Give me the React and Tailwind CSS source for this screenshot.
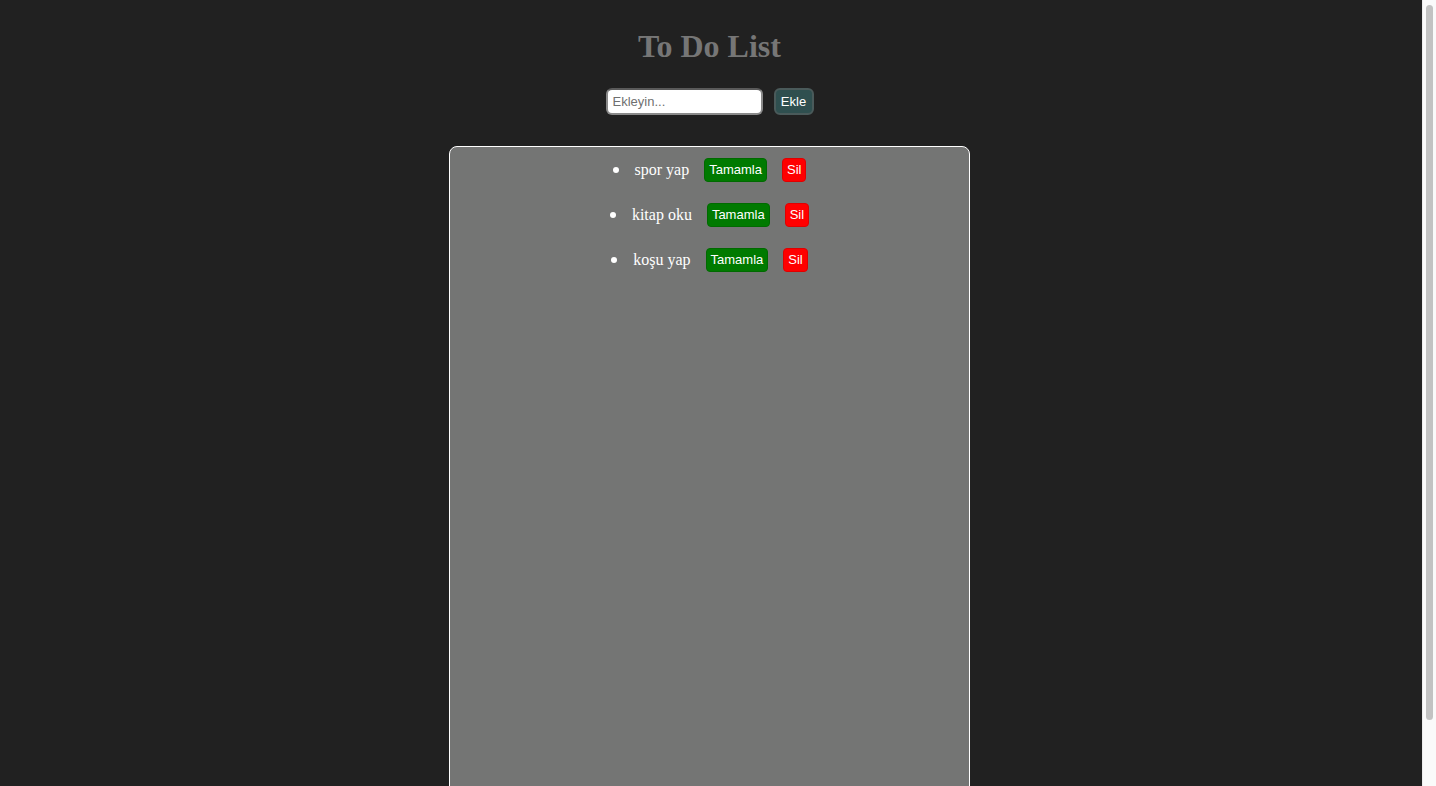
import { useState } from 'react';

const serif = { fontFamily: '"Liberation Serif", "Times New Roman", serif' };

function TodoItem({ text, onDone, onDelete }) {
  return (
    <li className="flex items-center justify-center h-[45px]">
      <span className="w-[6px] h-[6px] rounded-full bg-white mr-[16px]" />
      <span className="text-white text-[16px]" style={serif}>{text}</span>
      <button
        onClick={onDone}
        className="ml-[15px] h-[24px] px-[4px] rounded-[4px] bg-[#007a00] text-white text-[13px] border border-[#006a00]"
      >
        Tamamla
      </button>
      <button
        onClick={onDelete}
        className="ml-[15px] h-[24px] px-[4px] rounded-[4px] bg-[#ff0000] text-white text-[13px] border border-[#e00000]"
      >
        Sil
      </button>
    </li>
  );
}

export default function App() {
  const [items, setItems] = useState(['spor yap', 'kitap oku', 'koşu yap']);
  const [value, setValue] = useState('');

  const add = () => {
    if (!value.trim()) return;
    setItems([...items, value.trim()]);
    setValue('');
  };

  return (
    <div className="flex h-[786px] overflow-hidden" style={{ fontFamily: '"Liberation Sans", Arial, sans-serif' }}>
      <div className="flex-1 bg-[#212121] flex flex-col items-center pr-[3px]">
        <h1 className="mt-[26px] text-[32px] font-bold text-[#767676] leading-[40px]" style={serif}>
          To Do List
        </h1>
        {/* input row */}
        <div className="mt-[22px] flex items-center gap-[11px]">
          <input
            value={value}
            onChange={(e) => setValue(e.target.value)}
            placeholder="Ekleyin..."
            className="w-[157px] h-[27px] px-[5px] rounded-[6px] bg-white text-[13px] text-black placeholder:text-[#6f6f6f] border-2 border-[#8a8a8a] border-t-[#5a5a5a] outline-none"
          />
          <button
            onClick={add}
            className="w-[40px] h-[27px] rounded-[6px] bg-[#2f4f4f] text-white text-[13px] border-2 border-[#4a5a5a]"
          >
            Ekle
          </button>
        </div>
        {/* list card */}
        <div className="mt-[31px] w-[521px] h-[700px] shrink-0 bg-[#747574] border border-white rounded-t-[8px]">
          <ul>
            {items.map((t, i) => (
              <TodoItem
                key={i}
                text={t}
                onDone={() => {}}
                onDelete={() => setItems(items.filter((_, j) => j !== i))}
              />
            ))}
          </ul>
        </div>
      </div>
      {/* scrollbar */}
      <div className="w-[14px] bg-[#fafafa] border-l border-[#ececec] pt-[5px] px-[3px]">
        <div className="h-[715px] rounded-full bg-[#c2c2c2]" />
      </div>
    </div>
  );
}
